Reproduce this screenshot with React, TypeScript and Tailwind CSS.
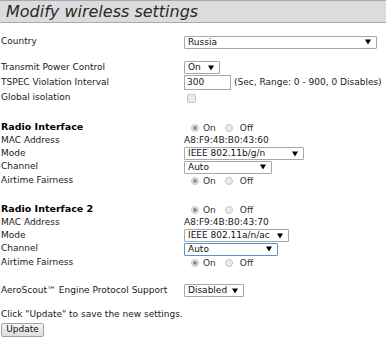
import React from "react";

const font = { fontFamily: '"DejaVu Sans", Verdana, sans-serif' };

function Tri() {
  return (
    <svg width="6" height="6" viewBox="0 0 6 6" className="shrink-0">
      <polygon points="0,0.5 6,0.5 3,5.5" fill="#000" />
    </svg>
  );
}

function Select({ text, w, focused }: { text: string; w: string; focused?: boolean }) {
  return (
    <div
      className={`${w} h-[13px] flex items-center justify-between bg-white pl-[3px] pr-[5px] border ${
        focused ? "border-[#5b8fd6]" : "border-[#a8a8a8]"
      } rounded-[1px] text-[#111]`}
    >
      <span className="leading-none whitespace-nowrap">{text}</span>
      <Tri />
    </div>
  );
}

function Radio({ checked }: { checked?: boolean }) {
  return (
    <span className="w-[8px] h-[8px] rounded-full border border-[#c4c4c4] bg-[#ececec] flex items-center justify-center shrink-0">
      {checked && <span className="w-[4px] h-[4px] rounded-full bg-[#8a8a8a]" />}
    </span>
  );
}

function OnOff() {
  return (
    <div className="flex items-center pl-[7px] text-[#333]">
      <Radio checked />
      <span className="ml-[4px] mt-[2px]">On</span>
      <span className="ml-[9px]">
        <Radio />
      </span>
      <span className="ml-[7px] mt-[2px]">Off</span>
    </div>
  );
}

function Row({ label, h, children, bold }: { label: string; h: string; children?: React.ReactNode; bold?: boolean }) {
  return (
    <div className={`flex items-center ${h}`}>
      <div className={`w-[184px] pl-[1px] shrink-0 whitespace-nowrap ${bold ? "font-bold text-[9.5px] text-black" : ""}`}>{label}</div>
      <div className="flex items-center">{children}</div>
    </div>
  );
}

export default function App() {
  return (
    <div className="w-[386px] h-[347px] bg-white text-[9px] text-[#1a1a1a] overflow-hidden" style={font}>
      <div className="h-[23px] bg-[#dcdcdc] border-y border-[#a4aabb] flex items-center pl-[6px]">
        <span className="italic text-[16px] leading-[21px] text-[#2a2a2a]">Modify wireless settings</span>
      </div>

      <div className="mt-[12px]">
        <Row label="Country" h="h-[14px]">
          <Select text="Russia" w="w-[193px]" />
        </Row>
      </div>

      <div className="mt-[11px]">
        <Row label="Transmit Power Control" h="h-[15px]">
          <Select text="On" w="w-[36px]" />
        </Row>
        <Row label="TSPEC Violation Interval" h="h-[15px]">
          <div className="w-[47px] h-[15px] border border-[#a8a8a8] bg-white pl-[2px] flex items-center">300</div>
          <span className="ml-[3px] whitespace-nowrap">(Sec, Range: 0 - 900, 0 Disables)</span>
        </Row>
        <Row label="Global isolation" h="h-[16px]">
          <span className="ml-[3px] w-[9px] h-[9px] rounded-[2px] border border-[#c4c4c4] bg-[#ececec]" />
        </Row>
      </div>

      <div className="mt-[15px]">
        <Row label="Radio Interface" h="h-[13px]" bold>
          <OnOff />
        </Row>
        <Row label="MAC Address" h="h-[13px]">
          <span>A8:F9:4B:B0:43:60</span>
        </Row>
        <Row label="Mode" h="h-[13px]">
          <Select text="IEEE 802.11b/g/n" w="w-[120px]" />
        </Row>
        <Row label="Channel" h="h-[14px]">
          <Select text="Auto" w="w-[88px]" />
        </Row>
        <Row label="Airtime Fairness" h="h-[14px]">
          <OnOff />
        </Row>
      </div>

      <div className="mt-[15px]">
        <Row label="Radio Interface 2" h="h-[13px]" bold>
          <OnOff />
        </Row>
        <Row label="MAC Address" h="h-[13px]">
          <span>A8:F9:4B:B0:43:70</span>
        </Row>
        <Row label="Mode" h="h-[13px]">
          <Select text="IEEE 802.11a/n/ac" w="w-[105px]" />
        </Row>
        <Row label="Channel" h="h-[14px]">
          <Select text="Auto" w="w-[94px]" focused />
        </Row>
        <Row label="Airtime Fairness" h="h-[14px]">
          <OnOff />
        </Row>
      </div>

      <div className="mt-[14px]">
        <Row label="AeroScout™ Engine Protocol Support" h="h-[13px]">
          <Select text="Disabled" w="w-[60px]" />
        </Row>
      </div>

      <div className="mt-[11px] h-[13px] flex items-center pl-[1px]">Click "Update" to save the new settings.</div>
      <button className="mt-[2px] ml-[1px] w-[43px] h-[14px] flex items-center justify-center border border-[#a0a0a0] rounded-[2px] bg-gradient-to-b from-[#f6f6f6] to-[#dedede] text-[9px] text-[#111]">
        Update
      </button>
    </div>
  );
}
